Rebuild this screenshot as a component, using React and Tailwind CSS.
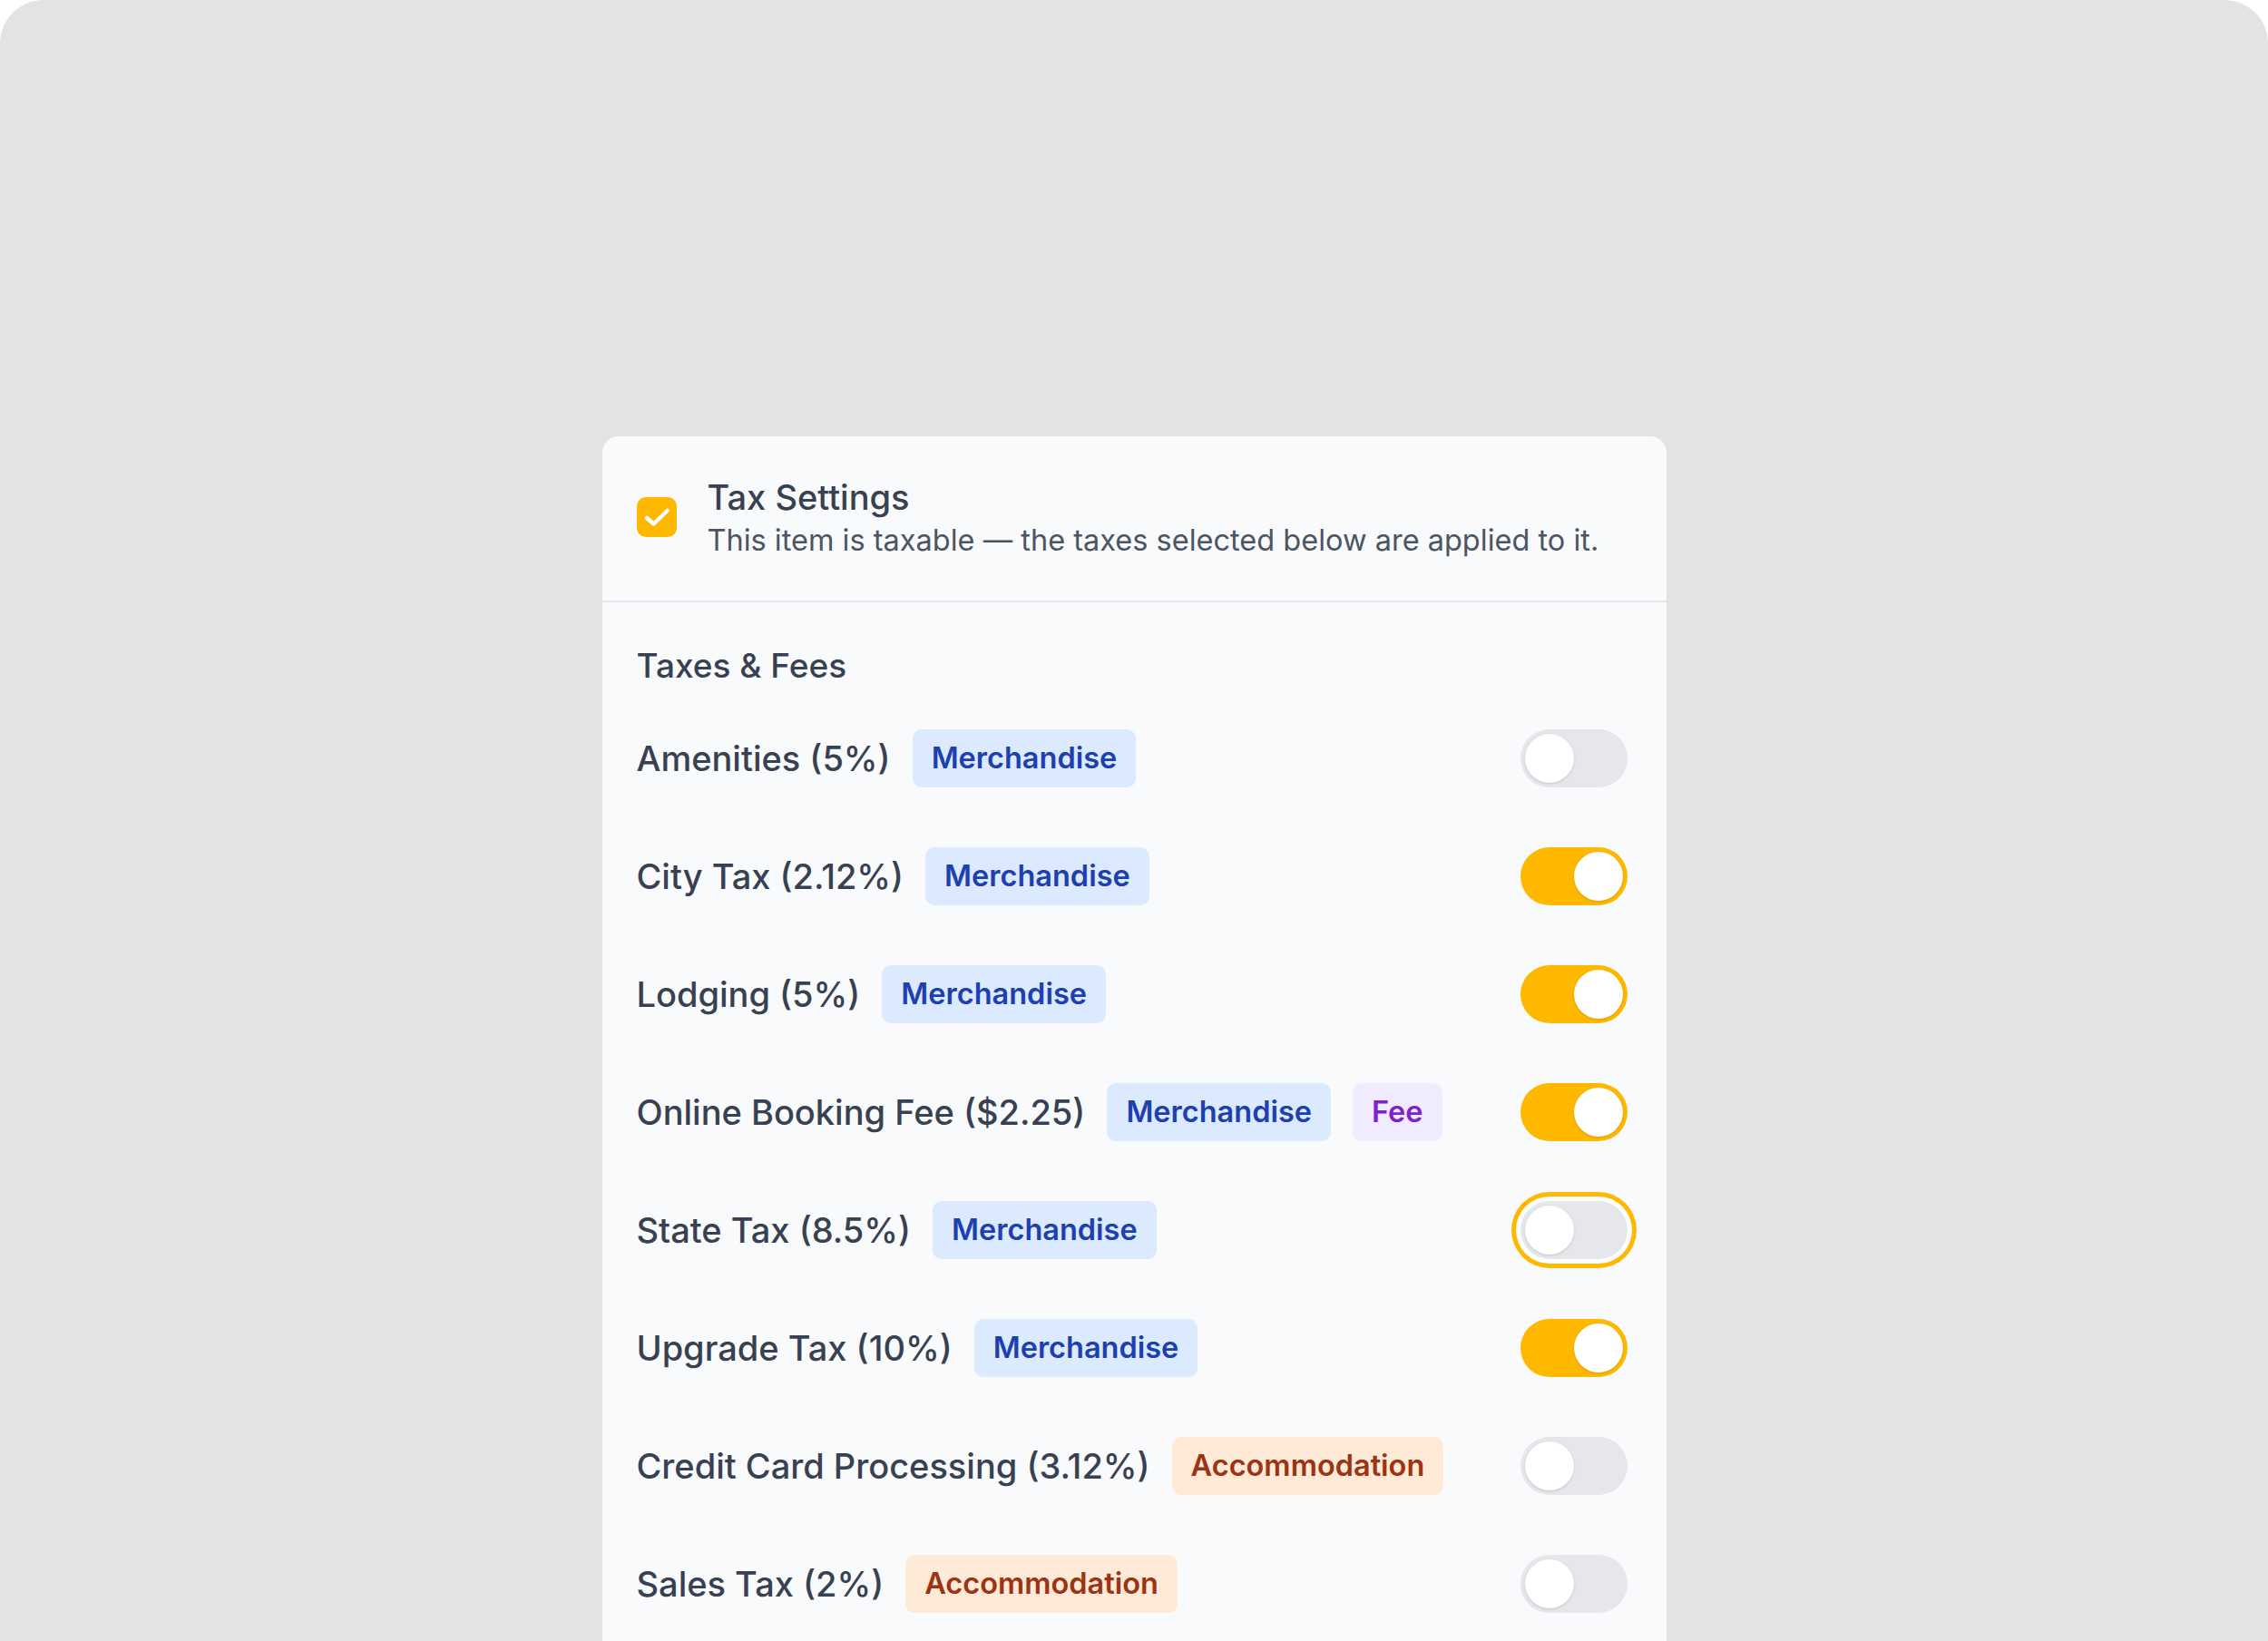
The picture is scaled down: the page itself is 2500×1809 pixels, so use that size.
import React, { useState } from "react";

const taxes = [
  { id: 1, name: "Amenities (5%)", tags: ["merch"], on: false },
  { id: 2, name: "City Tax (2.12%)", tags: ["merch"], on: true },
  { id: 3, name: "Lodging (5%)", tags: ["merch"], on: true },
  { id: 4, name: "Online Booking Fee ($2.25)", tags: ["merch", "fee"], on: true },
  { id: 5, name: "State Tax (8.5%)", tags: ["merch"], on: false, focused: true },
  { id: 6, name: "Upgrade Tax (10%)", tags: ["merch"], on: true },
  { id: 7, name: "Credit Card Processing (3.12%)", tags: ["accom"], on: false },
  { id: 8, name: "Sales Tax (2%)", tags: ["accom"], on: false },
];

const tagStyles = {
  merch: { label: "Merchandise", className: "bg-[#dbeafe] text-[#1e40af]" },
  fee: { label: "Fee", className: "bg-[#f1ebff] text-[#7e22ce]" },
  accom: { label: "Accommodation", className: "bg-[#ffead8] text-[#9a3412]" },
};

function Toggle({ checked, focused, onChange }) {
  return (
    <button
      type="button"
      onClick={onChange}
      className={`w-[118px] h-[64px] rounded-full p-[5px] flex items-center shrink-0 transition ${
        checked ? "bg-[#ffb800]" : "bg-[#e5e7eb]"
      } ${focused ? "ring-[5px] ring-[#ffb800] ring-offset-[5px] ring-offset-white" : ""}`}
    >
      <span
        className={`block size-[54px] rounded-full bg-white shadow-[0_1px_3px_rgba(0,0,0,0.15)] transition ${
          checked ? "translate-x-[54px]" : "translate-x-0"
        }`}
      />
    </button>
  );
}

export default function App() {
  const [items, setItems] = useState(taxes);

  const toggle = (id) =>
    setItems((prev) =>
      prev.map((t) => (t.id === id ? { ...t, on: !t.on } : t))
    );

  return (
    <div className="min-h-screen bg-white" style={{ fontFamily: "Inter, 'Noto Sans', sans-serif" }}>
      <div className="min-h-[1809px] bg-[#e3e3e3] rounded-t-[48px] pt-[481px]">
        <div className="w-[1173px] mx-auto bg-[#f9fafb] rounded-t-[18px] min-h-[1400px]">
          {/* Header */}
          <div className="flex items-center gap-[34px] pl-[38px] pr-[40px] pt-[43px] pb-[46px] border-b-2 border-[#e5e7eb]">
            <div className="size-[44px] rounded-[10px] bg-[#ffb800] flex items-center justify-center shrink-0">
              <svg viewBox="0 0 44 44" className="size-[44px]" fill="none">
                <path
                  d="M11 23 L18.5 29.5 L33.5 15"
                  stroke="white"
                  strokeWidth="4.5"
                  strokeLinecap="round"
                  strokeLinejoin="round"
                />
              </svg>
            </div>
            <div>
              <h1 className="text-[38px] leading-[48px] font-medium text-[#374151]">
                Tax Settings
              </h1>
              <p className="text-[32.5px] leading-[40px] text-[#4b5563] mt-[4px]">
                This item is taxable — the taxes selected below are applied to it.
              </p>
            </div>
          </div>

          {/* Taxes & Fees */}
          <div className="pl-[38px] pr-[43px] pt-[46px] pb-[60px]">
            <h2 className="text-[37px] leading-[48px] font-medium text-[#374151] mb-[46px]">
              Taxes &amp; Fees
            </h2>
            <div className="flex flex-col gap-[66px]">
              {items.map((t) => (
                <div key={t.id} className="flex items-center justify-between h-[64px]">
                  <div className="flex items-center gap-[24px]">
                    <span className="text-[38px] font-medium text-[#374151]">{t.name}</span>
                    {t.tags.map((tag) => (
                      <span
                        key={tag}
                        className={`h-[64px] px-[21px] rounded-[10px] flex items-center text-[32.5px] font-semibold ${tagStyles[tag].className}`}
                      >
                        {tagStyles[tag].label}
                      </span>
                    ))}
                  </div>
                  <Toggle checked={t.on} focused={t.focused} onChange={() => toggle(t.id)} />
                </div>
              ))}
            </div>
          </div>
        </div>
      </div>
    </div>
  );
}
